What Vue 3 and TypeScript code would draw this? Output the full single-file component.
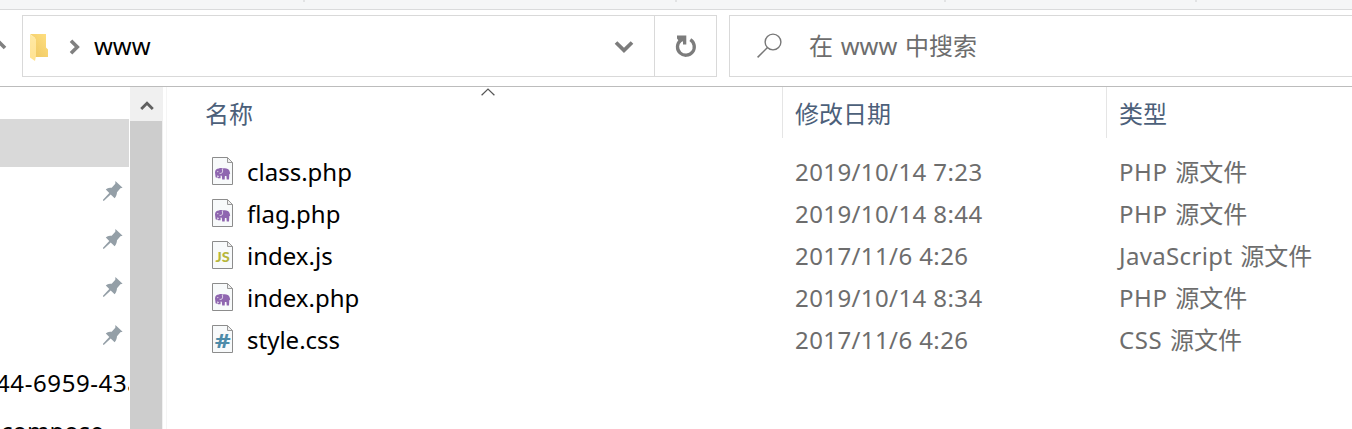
<script setup lang="ts">
type Kind = 'php' | 'js' | 'css'
interface FileRow {
  name: string
  date: string
  type: string
  lang: string
  kind: Kind
}
const files: FileRow[] = [
  { name: 'class.php', date: '2019/10/14 7:23', lang: 'PHP', type: '源文件', kind: 'php' },
  { name: 'flag.php', date: '2019/10/14 8:44', lang: 'PHP', type: '源文件', kind: 'php' },
  { name: 'index.js', date: '2017/11/6 4:26', lang: 'JavaScript', type: '源文件', kind: 'js' },
  { name: 'index.php', date: '2019/10/14 8:34', lang: 'PHP', type: '源文件', kind: 'php' },
  { name: 'style.css', date: '2017/11/6 4:26', lang: 'CSS', type: '源文件', kind: 'css' },
]
const pins = [1, 2, 3, 4]
</script>

<template>
  <div class="window">
    <div class="ribbon"><i /><i /><i /><i /></div>
    <div class="toolbar">
      <svg class="up" width="22" height="62" viewBox="0 0 22 62">
        <path d="M-8 33 L-1.5 26.5 L5 33" fill="none" stroke="#808080" stroke-width="3.6" />
      </svg>
      <div class="address">
        <svg class="folder" width="20" height="28" viewBox="0 0 20 28">
          <defs>
            <linearGradient id="fb" x1="0" y1="1" x2="1" y2="0">
              <stop offset="0" stop-color="#edc660" /><stop offset="1" stop-color="#ffdf80" />
            </linearGradient>
            <linearGradient id="ff" x1="0" y1="0" x2="0" y2="1">
              <stop offset="0" stop-color="#ffe9a4" /><stop offset="1" stop-color="#ffe291" />
            </linearGradient>
          </defs>
          <path d="M0 0H16V13.5L18 15.5V23H5V4Z" fill="url(#fb)" />
          <path d="M0 0L6 5V22L5 27L0 23.5Z" fill="url(#ff)" />
        </svg>
        <svg class="crumb" width="12" height="16" viewBox="0 0 12 16">
          <path d="M2 1.7L8.3 8L2 14.3" fill="none" stroke="#808080" stroke-width="3.6" />
        </svg>
        <span class="path">www</span>
        <svg class="drop" width="20" height="14" viewBox="0 0 20 14">
          <path d="M2 2.5L10 10.3L18 2.5" fill="none" stroke="#7c7c7c" stroke-width="3.7" />
        </svg>
        <div class="refresh">
          <svg width="22" height="24" viewBox="0 0 22 24">
            <path d="M15.3 5.7A8.4 8.4 0 1 1 5.5 6.4" fill="none" stroke="#7c7c7c" stroke-width="3.3" />
            <path d="M2 1.5H11.3V10.5H8V7.2L5 8.5L2 4.5Z" fill="#7c7c7c" />
          </svg>
        </div>
      </div>
      <div class="search">
        <svg width="28" height="28" viewBox="0 0 28 28">
          <circle cx="17" cy="10" r="7.9" fill="none" stroke="#777" stroke-width="1.4" />
          <path d="M11.5 15.5L1.6 25.4" stroke="#777" stroke-width="1.5" />
        </svg>
        <span>在 <b>www</b> 中搜索</span>
      </div>
    </div>
    <div class="body">
      <div class="nav">
        <div class="selected" />
        <div v-for="p in pins" :key="p" class="quick">
          <svg width="22" height="22" viewBox="0 0 22 22">
            <path
              d="M13.4 1L20.6 7.7L18.4 8.3L15 12.2C14.8 14.5 14.2 16.4 12.6 18.2L8.7 14.4L2 20.8H1V19.7L7.3 12.9L3.8 9.5C5.7 7.7 7.5 7.7 9.7 7.7L13.3 3.8Z"
              fill="#949fa7"
            />
          </svg>
        </div>
        <div class="item">44-6959-43a</div>
        <div class="item second">compose</div>
      </div>
      <div class="scrollbar">
        <div class="arrow">
          <svg width="14" height="10" viewBox="0 0 14 10">
            <path d="M1.2 8L7 2.2L12.8 8" fill="none" stroke="#606060" stroke-width="2.8" />
          </svg>
        </div>
        <div class="thumb" />
      </div>
      <div class="list">
        <svg class="sort" width="14" height="8" viewBox="0 0 14 8">
          <path d="M.6 7.3L7 1L13.4 7.3" fill="none" stroke="#555" stroke-width="1.2" />
        </svg>
        <div class="grid head">
          <span class="name">名称</span><span class="cell">修改日期</span><span class="cell">类型</span>
        </div>
        <div v-for="f in files" :key="f.name" class="grid row">
          <div class="name">
            <svg class="doc" width="22" height="30" viewBox="0 0 22 30">
              <path d="M.5 .5H15.5L20.5 5.5V27.5H.5Z" fill="#f8fafb" stroke="#8c8c8c" />
              <path d="M15.5 .5V5.5H20.5Z" fill="#eee" stroke="#999" />
              <g v-if="f.kind === 'php'">
                <path
                  d="M3 15.5C3 12.5 4.6 11.4 7 11.4C8.3 10.9 9.6 11.1 10.6 11.5C13.6 10.9 16.8 11.4 17.5 14L18.2 16.6L17.3 17.3L17 22.5H14.7L14.4 19H12.9L12.7 22.5H10.2L9.8 18.7L8.6 18.4V21.3H6L5.2 20H6.9L5.8 18L5 20.7L3.6 20.2Z"
                  fill="#8f66b0"
                />
                <path d="M10.2 11.9C11.2 14.6 10.3 17 7.6 16.3" fill="none" stroke="#f3eff7" stroke-width=".9" />
                <circle cx="5.8" cy="14.6" r=".6" fill="#eee" />
              </g>
              <text v-else-if="f.kind === 'js'" class="glyph js" x="10.6" y="21.2" textLength="14.3" lengthAdjust="spacingAndGlyphs">JS</text>
              <text v-else class="glyph css" x="10.7" y="23" textLength="16" lengthAdjust="spacingAndGlyphs">#</text>
            </svg>
            <span class="label">{{ f.name }}</span>
          </div>
          <span class="cell date">{{ f.date }}</span>
          <span class="cell type"><span class="lang" :class="f.kind">{{ f.lang }}</span> {{ f.type }}</span>
        </div>
      </div>
    </div>
  </div>
</template>

<style>
body {
  overflow: hidden;
}
</style>

<style scoped>
.window {
  width: 1352px;
  height: 429px;
  overflow: hidden;
  background: #fff;
  display: flex;
  flex-direction: column;
  font: 24px/42px 'Noto Sans', 'Noto Sans CJK SC', sans-serif;
  color: #000;
  white-space: nowrap;
}
svg {
  display: block;
  flex: none;
}
.ribbon {
  flex: none;
  height: 10px;
  box-sizing: border-box;
  background: #f5f6f7;
  border-bottom: 1px solid #dadbdc;
  display: grid;
  grid-template-columns: 305px 372px 269px 251px;
}
.ribbon i {
  height: 2px;
  border-right: 2px solid #e2e3e4;
}
.toolbar {
  flex: none;
  display: flex;
  height: 77px;
  box-sizing: border-box;
  padding-top: 5px;
  border-bottom: 1px solid #bcbcbc;
}
.address,
.search {
  box-sizing: border-box;
  height: 62px;
  border: 1px solid #d9d9d9;
  display: flex;
  flex: none;
  align-items: center;
}
.address {
  width: 695px;
  margin-right: 12px;
}
.folder {
  margin: 4px 0 0 7px;
}
.crumb {
  margin: 2px 0 0 19px;
}
.path {
  width: 520px;
  margin: -1px 0 0 13px;
}
.drop {
  margin-top: 2px;
}
.refresh {
  margin-left: auto;
  height: 60px;
  width: 61px;
  border-left: 1px solid #d9d9d9;
  display: flex;
  align-items: center;
  justify-content: center;
}
.search {
  width: 640px;
  color: #6d6d6d;
}
.search svg {
  margin-left: 26px;
}
.search span {
  margin: -1px 0 0 25px;
  word-spacing: 1.5px;
}
.search b {
  font-weight: 400;
}
.body {
  flex: 1;
  min-height: 0;
  display: flex;
}
.nav {
  width: 129px;
  margin-right: 1px;
  overflow: hidden;
  flex: none;
}
.selected {
  margin-top: 32px;
  height: 48px;
  background: #d9d9d9;
}
.quick {
  height: 48px;
  display: flex;
  align-items: center;
  justify-content: flex-end;
  padding-right: 5px;
}
.item {
  height: 48px;
  line-height: 48px;
  margin-left: -4px;
  letter-spacing: 0.6px;
}
.item.second {
  margin-left: 1px;
  letter-spacing: 0;
}
.scrollbar {
  width: 33px;
  flex: none;
  background: #f0f0f0;
  display: flex;
  flex-direction: column;
}
.arrow {
  height: 34px;
  display: flex;
  align-items: center;
  justify-content: center;
  padding-top: 3px;
  box-sizing: border-box;
}
.thumb {
  flex: 1;
  width: 32px;
  background: #cdcdcd;
}
.list {
  flex: 1;
  margin-left: 3px;
  border-left: 1px solid #f5f5f5;
  position: relative;
}
.sort {
  position: absolute;
  left: 314px;
  top: 1px;
}
.grid {
  display: grid;
  grid-template-columns: 615px 324px 1fr;
}
.head {
  height: 51px;
  line-height: 53px;
  color: #4c607a;
  margin-bottom: 13px;
}
.head span {
  height: 51px;
}
.head .name {
  padding-left: 38px;
}
.cell {
  padding-left: 13px;
}
.head .cell {
  padding-left: 12px;
  border-left: 1px solid #e5e5e5;
}
.row {
  height: 42px;
  color: #6d6d6d;
}
.row .name {
  display: flex;
  align-items: center;
  padding-left: 45px;
  color: #000;
}
.label {
  margin-left: 13px;
}
.date {
  letter-spacing: 0.4px;
}
.type {
  word-spacing: 1.5px;
}
.lang {
  letter-spacing: 0.6px;
}
.lang.js {
  letter-spacing: 0.35px;
}
.glyph {
  font-family: Lato, sans-serif;
  font-weight: 900;
  text-anchor: middle;
}
.glyph.js {
  font-size: 14px;
  fill: #b7b73b;
}
.glyph.css {
  font-family: 'Noto Sans', sans-serif;
  font-weight: 700;
  font-size: 20px;
  fill: #4d8ba9;
}
</style>
